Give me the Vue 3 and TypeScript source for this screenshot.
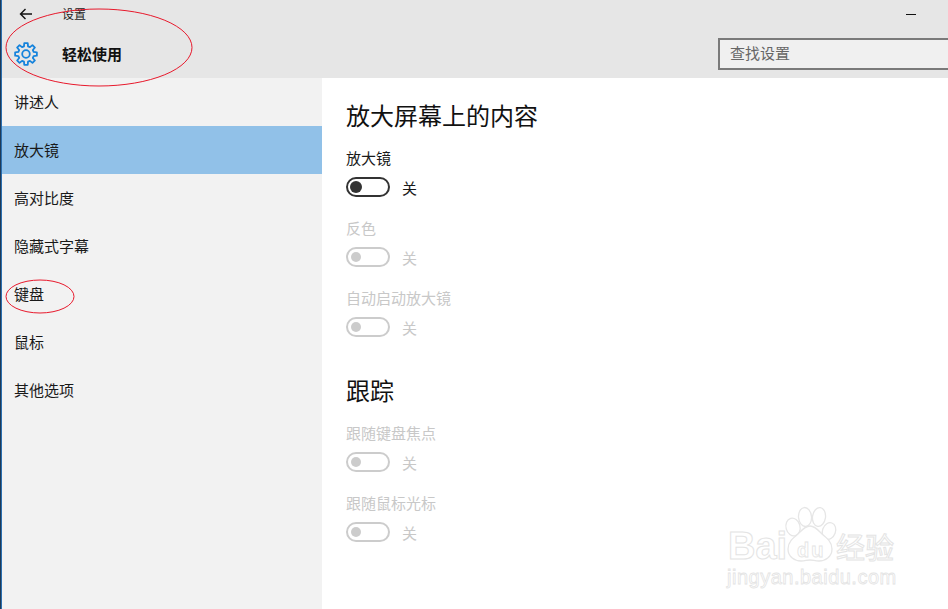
<script setup lang="ts">
interface Nav { label: string; active?: boolean }
const navs: Nav[] = [
  { label: '讲述人' },
  { label: '放大镜', active: true },
  { label: '高对比度' },
  { label: '隐藏式字幕' },
  { label: '键盘' },
  { label: '鼠标' },
  { label: '其他选项' },
]
interface Toggle { label: string; disabled: boolean }
const sectionA: Toggle[] = [
  { label: '放大镜', disabled: false },
  { label: '反色', disabled: true },
  { label: '自动启动放大镜', disabled: true },
]
const sectionB: Toggle[] = [
  { label: '跟随键盘焦点', disabled: true },
  { label: '跟随鼠标光标', disabled: true },
]

// Eight-toothed settings gear outline, centred on (12,12).
function gearPath(): string {
  const pts: string[] = []
  const pt = (r: number, deg: number) => {
    const a = (deg * Math.PI) / 180
    return `${(12 + r * Math.cos(a)).toFixed(2)} ${(12 + r * Math.sin(a)).toFixed(2)}`
  }
  for (let i = 0; i < 8; i++) {
    const c = i * 45 - 90
    pts.push(pt(7.9, c - 15), pt(11, c - 9), pt(11, c + 9), pt(7.9, c + 15))
  }
  return `M${pts.join('L')}Z`
}
const gear = gearPath()
</script>

<template>
  <div class="window">
    <header class="header">
      <div class="titlebar">
        <svg class="back" width="16" height="14" viewBox="0 0 16 14">
          <path d="M14 7H2.500M7.500 2 2.500 7l5 5" fill="none" stroke="#111" stroke-width="1.400" />
        </svg>
        <span class="app-name">设置</span>
        <span class="minimize"></span>
      </div>
      <div class="headbar">
        <svg class="gear" width="24" height="24" viewBox="0 0 24 24">
          <g fill="none" stroke="#1583dc" stroke-width="1.800" stroke-linejoin="round">
            <path :d="gear" />
            <circle cx="12" cy="12" r="3.800" />
          </g>
        </svg>
        <span class="section-name">轻松使用</span>
        <div class="search">查找设置</div>
      </div>
    </header>
    <div class="body">
      <nav class="side">
        <div v-for="n in navs" :key="n.label" class="nav-item" :class="{ active: n.active }">{{ n.label }}</div>
      </nav>
      <main class="main">
        <h2 class="title first">放大屏幕上的内容</h2>
        <div v-for="t in sectionA" :key="t.label" class="setting" :class="{ off: t.disabled }">
          <div class="setting-label">{{ t.label }}</div>
          <div class="toggle-row">
            <span class="toggle"><span class="knob"></span></span>
            <span class="state">关</span>
          </div>
        </div>
        <h2 class="title second">跟踪</h2>
        <div v-for="t in sectionB" :key="t.label" class="setting" :class="{ off: t.disabled }">
          <div class="setting-label">{{ t.label }}</div>
          <div class="toggle-row">
            <span class="toggle"><span class="knob"></span></span>
            <span class="state">关</span>
          </div>
        </div>
      </main>
    </div>

    <svg class="annot" width="948" height="609" viewBox="0 0 948 609">
      <ellipse cx="99" cy="47.500" rx="93" ry="38.500" fill="none" stroke="#e8192c" stroke-width="1" />
      <ellipse cx="40" cy="296.500" rx="34" ry="16.500" fill="none" stroke="#e8192c" stroke-width="1" />
    </svg>

    <div class="mark">
      <svg class="paw" width="54" height="58" viewBox="0 0 54 58">
        <g fill="#fff" stroke="#e6e6e6" stroke-width="1.300">
          <ellipse cx="9" cy="21" rx="7" ry="9" transform="rotate(-15 9 21)" />
          <ellipse cx="21" cy="11" rx="6.500" ry="9.500" transform="rotate(-5 21 11)" />
          <ellipse cx="35" cy="11" rx="6.500" ry="9.500" transform="rotate(8 35 11)" />
          <ellipse cx="45" cy="25" rx="6.500" ry="8.500" transform="rotate(20 45 25)" />
          <path d="M26 20c5 0 8 4 12 8 5 4 10 8 10 15 0 8-7 12-13 12-4 0-6-1-9-1s-5 1-9 1c-6 0-13-4-13-12 0-7 5-11 10-15 4-4 7-8 12-8z" />
        </g>
      </svg>
      <span class="mark-baidu">Bai</span>
      <span class="mark-du">du</span>
      <span class="mark-jy">经验</span>
      <span class="mark-url">jingyan.baidu.com</span>
    </div>
  </div>
</template>

<style>
html, body { margin: 0; padding: 0; background: #fff; overflow: hidden; }
</style>

<style scoped>
.window {
  position: relative;
  width: 948px;
  height: 609px;
  overflow: hidden;
  box-sizing: border-box;
  padding-left: 2px;
  background: linear-gradient(90deg, #1f3a56 1px, #2a6fb0 1px, #2a6fb0 2px, #fff 2px);
  font-family: "Noto Sans CJK SC", "Liberation Sans", sans-serif;
  color: #111;
}
.header { height: 78px; background: #e6e6e6; display: flex; flex-direction: column; }
.titlebar { height: 30px; display: flex; align-items: center; padding-left: 16px; font-size: 12px; }
.back { flex: none; position: relative; top: -1px; }
.app-name { margin-left: 28px; color: #222; position: relative; top: -2px; }
.minimize { margin-left: auto; margin-right: 32px; width: 10px; height: 1px; background: #111; position: relative; top: -1px; }
.headbar { flex: 1; display: flex; align-items: center; padding-left: 12px; }
.gear { flex: none; }
.section-name { margin-left: 24px; font-size: 15px; font-weight: 700; color: #111; position: relative; top: -1px; }
.search {
  margin-left: auto;
  width: 230px;
  height: 32px;
  box-sizing: border-box;
  border: 2px solid #7a7a7a;
  border-right: none;
  background: #f0f0f0;
  padding-left: 10px;
  line-height: 26px;
  font-size: 15px;
  color: #666;
}
.body { display: flex; height: 531px; }
.side { width: 320px; background: #f2f2f2; flex: none; }
.nav-item { height: 48px; line-height: 47px; padding-left: 12px; font-size: 15px; color: #1a1a1a; }
.nav-item.active { background: #91c1e8; }
.main { flex: 1; padding-left: 24px; background: #fff; }
.title { margin: 0; font-weight: 400; font-size: 24px; line-height: 32px; color: #111; }
.first { margin-top: 21px; margin-bottom: 16px; }
.second { margin-top: 17px; margin-bottom: 16px; }
.setting { height: 70px; }
.setting-label { font-size: 15px; line-height: 22px; color: #1a1a1a; }
.toggle-row { display: flex; align-items: center; margin-top: 8px; height: 20px; }
.toggle {
  width: 44px; height: 20px; box-sizing: border-box;
  border: 2px solid #333; border-radius: 10px;
  display: flex; align-items: center; padding-left: 2px;
}
.knob { width: 12px; height: 12px; border-radius: 50%; background: #333; }
.state { margin-left: 12px; font-size: 15px; color: #1a1a1a; }
.off .setting-label, .off .state { color: #c8c8c8; }
.off .toggle { border-color: #ccc; padding-left: 3px; }
.off .knob { background: #ccc; width: 10px; height: 10px; }
.annot { position: absolute; left: 0; top: 0; pointer-events: none; }
.mark { position: absolute; left: 728px; top: 505px; width: 180px; height: 90px; color: #fff; }
.paw { position: absolute; left: 56px; top: 1px; }
.mark-baidu, .mark-du, .mark-jy, .mark-url {
  position: absolute;
  font-family: "Liberation Sans", "Noto Sans CJK SC", sans-serif;
  -webkit-text-stroke: 1px #e4e4e4;
  color: #fff;
  white-space: nowrap;
}
.mark-baidu { left: 0; top: 20px; font-size: 38px; line-height: 42px; font-weight: 700; }
.mark-du { left: 69px; top: 33px; font-size: 20px; line-height: 24px; font-weight: 700; letter-spacing: 2px; -webkit-text-stroke-width: .8px; }
.mark-jy { left: 108px; top: 22px; font-size: 29px; line-height: 38px; font-family: "Noto Sans CJK SC", sans-serif; }
.mark-url { left: -1px; top: 60px; font-size: 20px; line-height: 24px; letter-spacing: .5px; -webkit-text-stroke-width: .8px; }
</style>
